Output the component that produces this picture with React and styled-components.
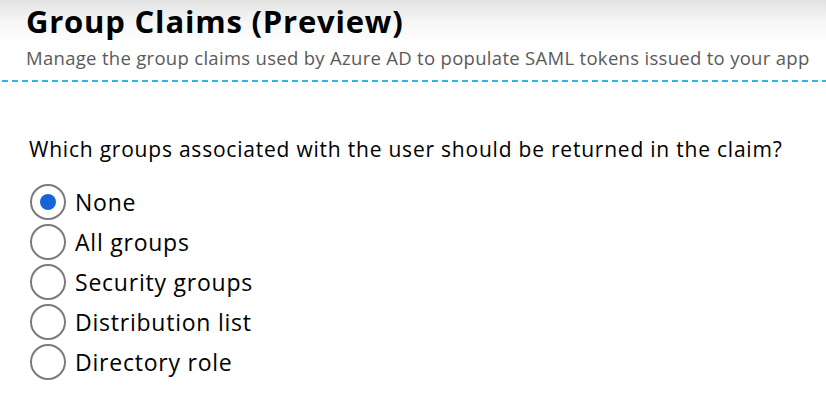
import React, { useState } from "react";
import styled, { createGlobalStyle } from "styled-components";

const Global = createGlobalStyle`
  html, body { margin: 0; padding: 0; background: #fff; }
  body { font-family: "Open Sans", "Noto Sans", sans-serif; color: #000; }
`;

const Page = styled.div`
  width: 826px;
  height: 410px;
  overflow: hidden;
  background: #fff;
`;

const Header = styled.header`
  padding: 3px 0 0 26px;
  background: linear-gradient(to bottom, #e2e2e2 0px, #f6f6f6 22px, #ffffff 44px);
`;

const Title = styled.h1`
  margin: 0;
  font-size: 31px;
  line-height: 36px;
  font-weight: 700;
  letter-spacing: 0.8px;
  color: #000;
`;

const Subtitle = styled.p`
  margin: 7px 0 0;
  font-size: 18.5px;
  line-height: 24px;
  letter-spacing: 0.3px;
  color: #5a5a5a;
  padding-bottom: 10px;
`;

const Divider = styled.div`
  height: 2px;
  margin-left: 2px;
  background: repeating-linear-gradient(to right, #2bb8e8 0 6px, transparent 6px 10px);
`;

const Body = styled.section`
  padding: 54px 0 0 29px;
`;

const Question = styled.p`
  margin: 0;
  font-size: 21px;
  line-height: 26px;
  letter-spacing: 0.78px;
  color: #000;
`;

const Options = styled.div`
  margin-top: 20px;
  display: flex;
  flex-direction: column;
  padding-left: 1px;
`;

const Row = styled.label`
  display: flex;
  align-items: center;
  gap: 9px;
  height: 40px;
  cursor: pointer;
  font-size: 23px;
  line-height: 40px;
  letter-spacing: 0.77px;
  color: #000;
`;

const Circle = styled.span`
  box-sizing: border-box;
  width: 36px;
  height: 36px;
  border: 2px solid #7b7b7b;
  border-radius: 50%;
  display: flex;
  align-items: center;
  justify-content: center;
  flex: none;
  &::after {
    content: "";
    width: 16px;
    height: 16px;
    border-radius: 50%;
    background: #1763d9;
    display: ${(p) => (p.$checked ? "block" : "none")};
  }
`;

const Hidden = styled.input`
  display: none;
`;

const options = ["None", "All groups", "Security groups", "Distribution list", "Directory role"];

export default function App() {
  const [value, setValue] = useState("None");
  return (
    <Page>
      <Global />
      <Header>
        <Title>Group Claims (Preview)</Title>
        <Subtitle>Manage the group claims used by Azure AD to populate SAML tokens issued to your app</Subtitle>
      </Header>
      <Divider />
      <Body>
        <Question>Which groups associated with the user should be returned in the claim?</Question>
        <Options>
          {options.map((o) => (
            <Row key={o}>
              <Hidden type="radio" name="groups" checked={value === o} onChange={() => setValue(o)} />
              <Circle $checked={value === o} />
              {o}
            </Row>
          ))}
        </Options>
      </Body>
    </Page>
  );
}
